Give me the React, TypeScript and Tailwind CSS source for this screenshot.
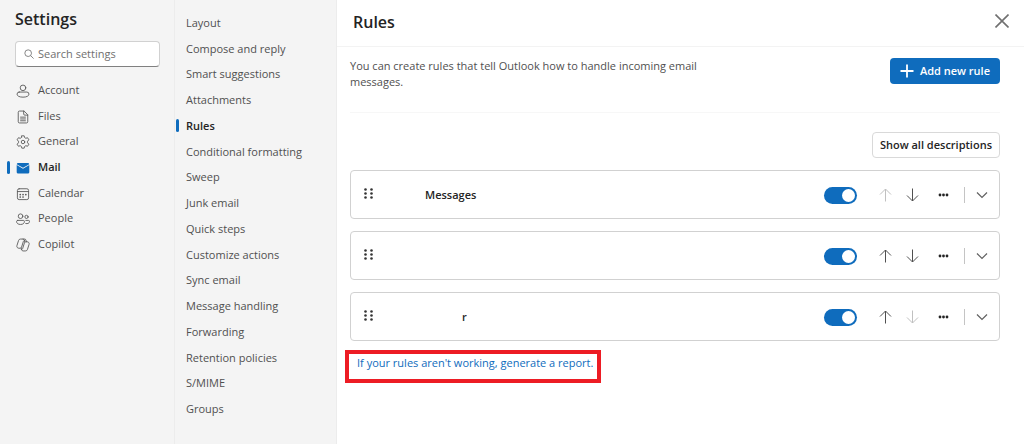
import { useState, type ReactNode } from "react";
import { clsx } from "clsx";

type Rule = { id: number; name: string; indent: string; enabled: boolean };

const SECTIONS: { name: string; icon: ReactNode }[] = [
  {
    name: "Account",
    icon: (
      <Icon>
        <circle cx="10" cy="5.5" r="4" />
        <path d="M4.500 11.500h11a3 3 0 0 1 3 3c0 2.700-3.500 4.300-8.500 4.300s-8.500-1.600-8.500-4.300a3 3 0 0 1 3-3Z" />
      </Icon>
    ),
  },
  {
    name: "Files",
    icon: (
      <Icon>
        <path d="M11 1.500H5A1.800 1.800 0 0 0 3.200 3.300v13.400A1.800 1.800 0 0 0 5 18.500h10a1.800 1.800 0 0 0 1.800-1.800V7.300Z" />
        <path d="M11 1.500v4.300a1.500 1.500 0 0 0 1.500 1.500h4.300M6.500 10.200h7M6.500 12.800h7M6.500 15.400h7" />
      </Icon>
    ),
  },
  {
    name: "General",
    icon: (
      <Icon>
        <path d="M8.300 1.200h3.400l.6 2.500 1.700 1 2.500-.8 1.900 3-1.900 1.900v2.400l1.900 1.900-1.900 3-2.500-.8-1.700 1-.6 2.500H8.300l-.6-2.500-1.700-1-2.500.8-1.900-3 1.900-1.900V8.800L1.600 6.900l1.900-3 2.500.8 1.700-1Z" />
        <circle cx="10" cy="10" r="2.500" />
      </Icon>
    ),
  },
  {
    name: "Mail",
    icon: (
      <svg viewBox="0 0 20 20" className="size-3.5 text-[#0f6cbd]" fill="currentColor" aria-hidden="true">
        <path d="M1 5.800 10 11l9-5.200V16a2 2 0 0 1-2 2H3a2 2 0 0 1-2-2Z" />
        <path d="M3 3h14a2 2 0 0 1 2 1.600L10 9.700 1 4.600A2 2 0 0 1 3 3Z" />
      </svg>
    ),
  },
  {
    name: "Calendar",
    icon: (
      <Icon>
        <rect x="2" y="2.500" width="16" height="15.500" rx="2.500" />
        <path d="M2 6.500h16" />
        <path d="M6 10.800h.1M10 10.800h.1M14 10.800h.1M6 14.300h.1M10 14.300h.1" strokeWidth="2.400" />
      </Icon>
    ),
  },
  {
    name: "People",
    icon: (
      <Icon>
        <circle cx="6.500" cy="6" r="3.300" />
        <circle cx="15" cy="7" r="2.300" />
        <path d="M2.500 12h8a1.500 1.500 0 0 1 1.500 1.500c0 2.700-2 4.300-5.500 4.300S.8 16.200.8 13.500A1.600 1.600 0 0 1 2.500 12ZM14 12h3.800a1.500 1.500 0 0 1 1.500 1.500c0 2.500-2.500 3.700-5.300 3" />
      </Icon>
    ),
  },
  {
    name: "Copilot",
    icon: (
      <Icon>
        <path d="M12.500 5.500 11.800 3a2 2 0 0 0-2-1.500H6.500A3 3 0 0 0 3.600 3.700L1.300 11a2.800 2.800 0 0 0 2.700 3.600h2a2 2 0 0 0 1.900-1.400L10.500 5a2 2 0 0 1 2-1.500" />
        <path d="m7.500 14.500.7 2.500a2 2 0 0 0 2 1.500h3.300a3 3 0 0 0 2.900-2.200L18.700 9A2.800 2.800 0 0 0 16 5.400h-2a2 2 0 0 0-1.900 1.400L9.500 15a2 2 0 0 1-2 1.500M10 1.500h2.200a2 2 0 0 1 2 1.500l.7 2.400" />
      </Icon>
    ),
  },
];

const PAGES = [
  "Layout",
  "Compose and reply",
  "Smart suggestions",
  "Attachments",
  "Rules",
  "Conditional formatting",
  "Sweep",
  "Junk email",
  "Quick steps",
  "Customize actions",
  "Sync email",
  "Message handling",
  "Forwarding",
  "Retention policies",
  "S/MIME",
  "Groups",
];

const INITIAL_RULES: Rule[] = [
  { id: 1, name: "Messages", indent: "pl-[52px]", enabled: true },
  { id: 2, name: "", indent: "pl-[52px]", enabled: true },
  { id: 3, name: "r", indent: "pl-[89px]", enabled: true },
];

function Icon({ children }: { children: ReactNode }) {
  return (
    <svg
      viewBox="0 0 20 20"
      className="size-3.5"
      fill="none"
      stroke="currentColor"
      strokeWidth="1.3"
      strokeLinecap="round"
      strokeLinejoin="round"
      aria-hidden="true"
    >
      {children}
    </svg>
  );
}

function Arrow({ down = false }: { down?: boolean }) {
  return (
    <svg viewBox="0 0 13 14" className="w-[13px] h-3.5" fill="none" stroke="currentColor" aria-hidden="true">
      <path d={down ? "M6.500.5V13M1 7.500 6.500 13 12 7.500" : "M6.500 13.500V1M1 6.500 6.500 1 12 6.500"} />
    </svg>
  );
}

function RuleRow({
  rule,
  first,
  last,
  onToggle,
  onMove,
}: {
  rule: Rule;
  first: boolean;
  last: boolean;
  onToggle: () => void;
  onMove: (step: number) => void;
}) {
  return (
    <li className="flex items-center h-[49px] pl-[13px] border border-[#d1d1d1] rounded">
      <svg viewBox="0 0 9 12" className="w-[9px] h-3 mb-0.5 text-[#333]" fill="currentColor" aria-hidden="true">
        {[1.5, 5.5, 9.5].map((y) => (
          <g key={y}>
            <circle cx="1.500" cy={y} r="1.300" />
            <circle cx="7.500" cy={y} r="1.300" />
          </g>
        ))}
      </svg>
      <span className={clsx("flex-1 font-semibold text-[#242424]", rule.indent)}>{rule.name}</span>
      <input
        type="checkbox"
        role="switch"
        aria-label={`Turn rule ${rule.id} on or off`}
        checked={rule.enabled}
        onChange={onToggle}
        className="appearance-none flex items-center w-[33px] h-[17px] mt-0.5 mr-[15px] px-0.5 rounded-full bg-[#8a8a8a] checked:bg-[#0f6cbd] checked:justify-end before:size-[13px] before:rounded-full before:bg-white"
      />
      <button
        aria-label="Move up"
        disabled={first}
        onClick={() => onMove(-1)}
        className="flex justify-center w-[27px] text-[#505050] disabled:text-[#c0c0c0]"
      >
        <Arrow />
      </button>
      <button
        aria-label="Move down"
        disabled={last}
        onClick={() => onMove(1)}
        className="flex justify-center w-[27px] text-[#505050] disabled:text-[#c0c0c0]"
      >
        <Arrow down />
      </button>
      <button aria-label="More options" className="flex items-center pl-3 w-[38px] text-[#242424]">
        <svg viewBox="0 0 11 4" className="w-[11px] h-1" fill="currentColor" aria-hidden="true">
          <circle cx="2" cy="2" r="1.400" />
          <circle cx="5.500" cy="2" r="1.400" />
          <circle cx="9" cy="2" r="1.400" />
        </svg>
      </button>
      <span className="w-px h-4 bg-[#c4c4c4]" />
      <button aria-label="Expand rule" className="flex justify-center w-[34px] text-[#616161]">
        <svg viewBox="0 0 12 8" className="w-3 h-2" fill="none" stroke="currentColor" strokeWidth="1.200" aria-hidden="true">
          <path d="m1 1.500 5 5 5-5" />
        </svg>
      </button>
    </li>
  );
}

export default function App() {
  const [rules, setRules] = useState(INITIAL_RULES);

  const toggle = (id: number) =>
    setRules((prev) => prev.map((r) => (r.id === id ? { ...r, enabled: !r.enabled } : r)));

  const move = (index: number, step: number) =>
    setRules((prev) => {
      const next = [...prev];
      [next[index], next[index + step]] = [next[index + step], next[index]];
      return next;
    });

  return (
    <div className="flex min-h-screen bg-white font-['Open_Sans','Noto_Sans',sans-serif] text-[11px] leading-4 text-[#505050]">
      <aside className="w-[175px] shrink-0 bg-[#f4f4f4] border-r border-[#ececec]">
        <h1 className="pt-[7px] pl-[15px] text-base leading-6 font-semibold text-[#242424]">Settings</h1>
        <label className="flex items-center gap-1 h-[26px] mt-[10px] ml-[15px] mr-3.5 pl-2 bg-white border border-[#d1d1d1] border-b-[#808080] rounded">
          <svg viewBox="0 0 12 12" className="size-2.5 shrink-0 text-[#707070]" fill="none" stroke="currentColor" aria-hidden="true">
            <circle cx="5" cy="5" r="4" />
            <path d="m8 8 3.500 3.500" />
          </svg>
          <input
            type="search"
            aria-label="Search settings"
            placeholder="Search settings"
            className="min-w-0 flex-1 outline-none placeholder:text-[#707070]"
          />
        </label>
        <nav aria-label="Settings sections">
          <ul className="flex flex-col h-[180px] mt-[10px]">
            {SECTIONS.map(({ name, icon }) => (
              <li key={name} className="flex-1">
                <a
                  href="#"
                  aria-current={name === "Mail" ? "page" : undefined}
                  className={clsx(
                    "flex items-center h-full pl-[7px]",
                    name === "Mail" && "font-semibold text-[#242424]"
                  )}
                >
                  <span className={clsx("w-[3px] h-[13px] mr-1.5 rounded-sm", name === "Mail" && "bg-[#0f6cbd]")} />
                  <span className="mt-0.5 mr-2 text-[#5c5c5c]">{icon}</span>
                  {name}
                </a>
              </li>
            ))}
          </ul>
        </nav>
      </aside>

      <nav aria-label="Mail settings" className="w-[162px] shrink-0 bg-[#f4f4f4] border-r border-[#ececec]">
        <ul className="flex flex-col h-[412px] mt-[10px]">
          {PAGES.map((name) => (
            <li key={name} className="flex-1">
              <a
                href="#"
                aria-current={name === "Rules" ? "page" : undefined}
                className={clsx("flex items-center h-full pl-px", name === "Rules" && "font-semibold text-[#242424]")}
              >
                <span className={clsx("w-[3px] h-[13px] mr-[7px] rounded-sm", name === "Rules" && "bg-[#0f6cbd]")} />
                {name}
              </a>
            </li>
          ))}
        </ul>
      </nav>

      <main className="flex-1 min-w-0">
        <header className="flex items-center justify-between h-[47px] pl-4 pr-[15px] pb-1 border-b border-[#f3f3f3]">
          <h2 className="pt-0.5 text-base leading-6 font-semibold text-[#242424]">Rules</h2>
          <button aria-label="Close" className="text-[#707070]">
            <svg viewBox="0 0 14 14" className="size-3.5" fill="none" stroke="currentColor" strokeWidth="1.600" aria-hidden="true">
              <path d="m.5.5 13 13M13.500.5l-13 13" />
            </svg>
          </button>
        </header>

        <div className="pl-[13px] pr-6">
          <div className="flex items-start justify-between pt-[11px] pb-[22px] border-b border-[#f7f7f7]">
            <p className="max-w-[360px]">
              You can create rules that tell Outlook how to handle incoming email messages.
            </p>
            <button className="flex items-center gap-1.5 h-[26px] px-2.5 rounded-sm bg-[#0f6cbd] font-semibold text-white">
              <svg viewBox="0 0 14 14" className="size-3.5" fill="none" stroke="currentColor" strokeWidth="1.800" aria-hidden="true">
                <path d="M7 .5v13M.5 7h13" />
              </svg>
              Add new rule
            </button>
          </div>

          <div className="flex justify-end pt-[19px] pb-3">
            <button className="h-[26px] px-[7px] border border-[#d9d9d9] rounded-sm font-semibold text-[#242424]">
              Show all descriptions
            </button>
          </div>

          <ul className="flex flex-col gap-3">
            {rules.map((rule, i) => (
              <RuleRow
                key={rule.id}
                rule={rule}
                first={i === 0}
                last={i === rules.length - 1}
                onToggle={() => toggle(rule.id)}
                onMove={(step) => move(i, step)}
              />
            ))}
          </ul>

          <div className="w-fit h-[33px] mt-[9px] -ml-[5px] pt-px pl-2 pr-1 border-4 border-[#ed1c24]">
            <a href="#" className="text-[#0f6cbd]">
              If your rules aren't working, generate a report.
            </a>
          </div>
        </div>
      </main>
    </div>
  );
}
